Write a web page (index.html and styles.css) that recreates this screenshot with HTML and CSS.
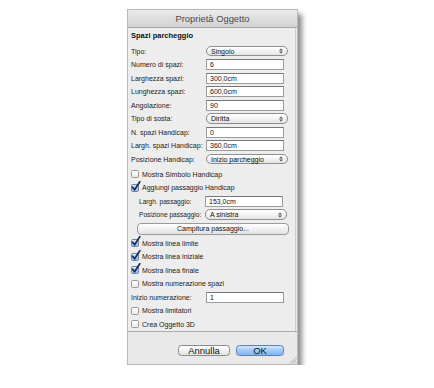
FILE: index.html
```html
<!DOCTYPE html>
<html>
<head>
<meta charset="utf-8">
<link rel="stylesheet" href="styles.css">
</head>
<body>
<div class="window">
  <div class="titlebar">Proprietà Oggetto</div>
  <div class="panel">
    <div class="header">Spazi parcheggio</div>

    <div class="row"><span class="label">Tipo:</span><div class="popup"><span>Singolo</span><svg class="arrows" width="4" height="6" viewBox="0 0 4 6"><path d="M0 2.4 L2 0.4 L4 2.4Z M0 3.6 L2 5.6 L4 3.6Z" fill="#555"/></svg></div></div>
    <div class="row"><span class="label">Numero di spazi:</span><div class="field">6</div></div>
    <div class="row"><span class="label">Larghezza spazi:</span><div class="field">300,0cm</div></div>
    <div class="row"><span class="label">Lunghezza spazi:</span><div class="field">600,0cm</div></div>
    <div class="row"><span class="label">Angolazione:</span><div class="field">90</div></div>
    <div class="row"><span class="label">Tipo di sosta:</span><div class="popup"><span>Diritta</span><svg class="arrows" width="4" height="6" viewBox="0 0 4 6"><path d="M0 2.4 L2 0.4 L4 2.4Z M0 3.6 L2 5.6 L4 3.6Z" fill="#555"/></svg></div></div>
    <div class="row"><span class="label">N. spazi Handicap:</span><div class="field">0</div></div>
    <div class="row"><span class="label">Largh. spazi Handicap:</span><div class="field">360,0cm</div></div>
    <div class="row"><span class="label">Posizione Handicap:</span><div class="popup"><span>Inizio parcheggio</span><svg class="arrows" width="4" height="6" viewBox="0 0 4 6"><path d="M0 2.4 L2 0.4 L4 2.4Z M0 3.6 L2 5.6 L4 3.6Z" fill="#555"/></svg></div></div>

    <div class="check first"><span class="box"></span><span>Mostra Simbolo Handicap</span></div>
    <div class="check"><span class="box on"><svg width="10" height="11" viewBox="0 0 10 11"><path d="M1.6 6.2 L3.6 8.8 L8.8 0.8" fill="none" stroke="#1d2a55" stroke-width="1.7" stroke-linecap="round" stroke-linejoin="round"/></svg></span><span>Aggiungi passaggio Handicap</span></div>

    <div class="row sub"><span class="label">Largh. passaggio:</span><div class="field">153,0cm</div></div>
    <div class="row sub"><span class="label">Posizione passaggio:</span><div class="popup"><span>A sinistra</span><svg class="arrows" width="4" height="6" viewBox="0 0 4 6"><path d="M0 2.4 L2 0.4 L4 2.4Z M0 3.6 L2 5.6 L4 3.6Z" fill="#555"/></svg></div></div>

    <div class="btnrow"><div class="wide">Campitura passaggio...</div></div>

    <div class="check"><span class="box on"><svg width="10" height="11" viewBox="0 0 10 11"><path d="M1.6 6.2 L3.6 8.8 L8.8 0.8" fill="none" stroke="#1d2a55" stroke-width="1.7" stroke-linecap="round" stroke-linejoin="round"/></svg></span><span>Mostra linea limite</span></div>
    <div class="check"><span class="box on"><svg width="10" height="11" viewBox="0 0 10 11"><path d="M1.6 6.2 L3.6 8.8 L8.8 0.8" fill="none" stroke="#1d2a55" stroke-width="1.7" stroke-linecap="round" stroke-linejoin="round"/></svg></span><span>Mostra linea iniziale</span></div>
    <div class="check"><span class="box on"><svg width="10" height="11" viewBox="0 0 10 11"><path d="M1.6 6.2 L3.6 8.8 L8.8 0.8" fill="none" stroke="#1d2a55" stroke-width="1.7" stroke-linecap="round" stroke-linejoin="round"/></svg></span><span>Mostra linea finale</span></div>
    <div class="check"><span class="box"></span><span>Mostra numerazione spazi</span></div>
    <div class="row"><span class="label">Inizio numerazione:</span><div class="field">1</div></div>
    <div class="check"><span class="box"></span><span>Mostra limitatori</span></div>
    <div class="check"><span class="box"></span><span>Crea Oggetto 3D</span></div>
  </div>
  <div class="footer">
    <div class="button">Annulla</div>
    <div class="button ok">OK</div>
  </div>
  <svg class="grip" width="8" height="8" viewBox="0 0 8 8"><path d="M7.5 1 L1 7.5 M7.5 3.5 L3.5 7.5 M7.5 6 L6 7.5" stroke="#9a9a9a" stroke-width="0.8"/></svg>
</div>
</body>
</html>
```

FILE: styles.css
```css
* { box-sizing: border-box; }
html, body { margin: 0; padding: 0; background: #ffffff; }
body {
  font-family: "Liberation Sans", Arial, sans-serif;
  color: #1b1b1b;
  overflow: hidden;
}
.window {
  position: relative;
  margin: 9px 0 0 127px;
  width: 171px;
  height: 356px;
  border: 1px solid #b9b9b9;
  background: #ececec;
  box-shadow: 4px 5px 5px rgba(0, 0, 0, 0.45);
}
.titlebar {
  height: 18px;
  background: linear-gradient(#ebebeb, #d2d2d2);
  border-bottom: 1px solid #a6a6a6;
  text-align: center;
  font-size: 9.4px;
  line-height: 17px;
  color: #4a4a4a;
}
.panel {
  height: 303px;
  width: 168px;
  border-right: 1px solid #cdcdcd;
  padding: 2px 0 0 3px;
  background: #ededed;
}
.header {
  font-weight: bold;
  font-size: 7.5px;
  line-height: 12px;
  height: 14.25px;
  padding-bottom: 2.25px;
  color: #111;
}
.row {
  display: flex;
  align-items: center;
  height: 13.5px;
}
.label {
  width: 75px;
  font-size: 7px;
  white-space: nowrap;
}
.row.sub { padding-left: 8px; }
.row.sub .label { width: 66px; font-size: 6.6px; }
.field {
  width: 78px;
  height: 11px;
  background: #fff;
  border: 1px solid #9c9c9c;
  border-top-color: #777;
  font-size: 7px;
  line-height: 9px;
  padding: 0 3px;
  color: #111;
}
.popup {
  width: 82px;
  height: 10.5px;
  border: 1px solid #8e8e8e;
  border-radius: 5px;
  background: linear-gradient(#ffffff, #f3f3f3 50%, #e4e4e4);
  display: flex;
  align-items: center;
  justify-content: space-between;
  padding: 0 4px 0 4px;
  font-size: 7px;
  color: #111;
}
.arrows { display: block; }
.check {
  display: flex;
  align-items: center;
  height: 13.5px;
  font-size: 7px;
  white-space: nowrap;
}
.check.first { margin-top: 1.5px; }
.box {
  position: relative;
  width: 8px;
  height: 8px;
  margin-right: 3px;
  border: 1px solid #9a9a9a;
  border-radius: 1.5px;
  background: linear-gradient(#ffffff, #eaeaea);
  flex: none;
}
.box.on {
  border-color: #6f84a8;
  background: linear-gradient(#d9e9fb, #90b8e6);
}
.box svg {
  position: absolute;
  left: -1px;
  top: -4px;
}
.btnrow {
  height: 15px;
  display: flex;
  align-items: center;
  padding-left: 6px;
}
.wide {
  width: 152px;
  height: 12px;
  border: 1px solid #9a9a9a;
  border-radius: 4px;
  background: linear-gradient(#ffffff, #f1f1f1 50%, #e3e3e3);
  font-size: 7px;
  line-height: 10px;
  text-align: center;
  color: #111;
}
.footer {
  height: 33px;
  border-top: 1px solid #a9a9a9;
  display: flex;
  justify-content: flex-end;
  gap: 6px;
  padding: 13px 13px 0 0;
  background: #e9e9e9;
}
.button {
  width: 52px;
  height: 11px;
  border: 1px solid #8a8a8a;
  border-radius: 3.5px;
  background: linear-gradient(#ffffff, #f2f2f2 50%, #e2e2e2);
  font-size: 9.5px;
  line-height: 9px;
  text-align: center;
  color: #111;
}
.button.ok {
  width: 48px;
  border-color: #5a7fb3;
  background: linear-gradient(#d4e8fd, #9fcaf5 50%, #7db6f0);
}
.grip {
  position: absolute;
  right: 0;
  bottom: 0;
}
```
